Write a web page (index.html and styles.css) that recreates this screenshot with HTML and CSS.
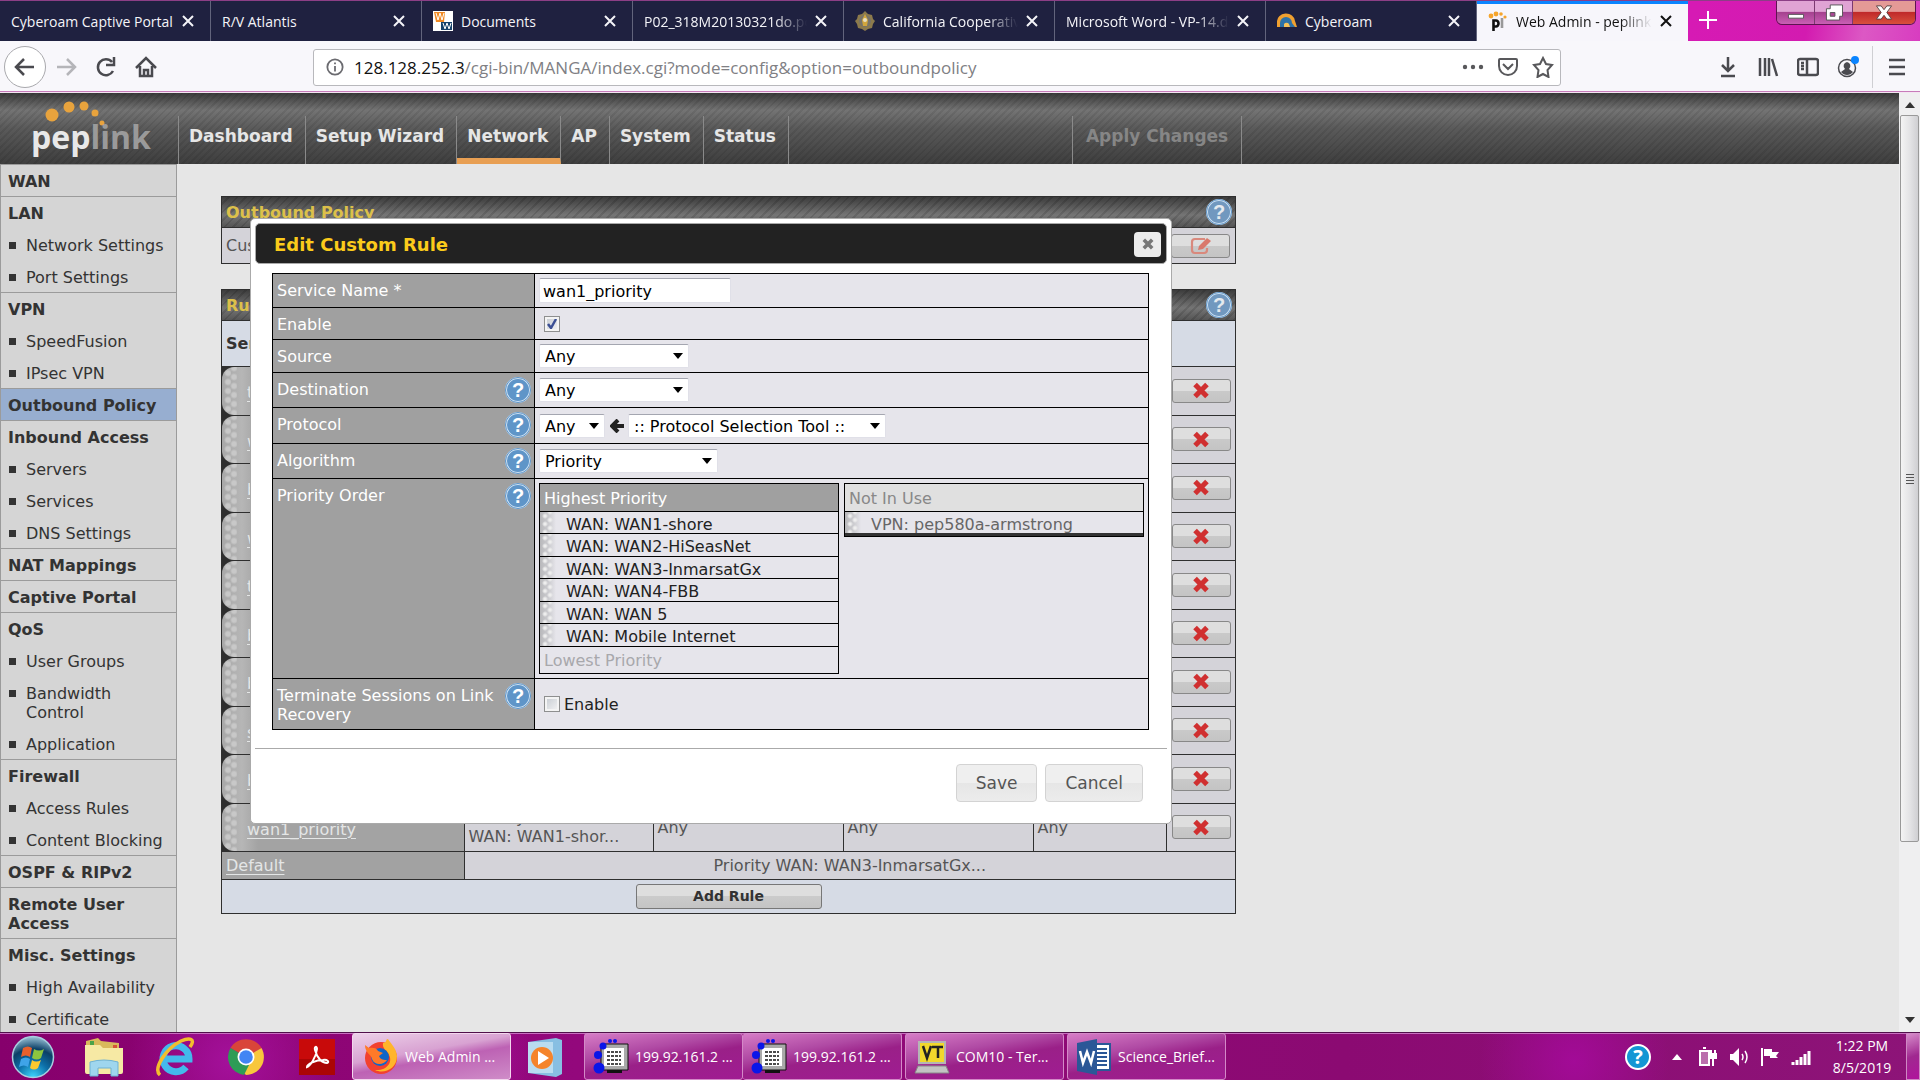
FILE: index.html
```html
<!DOCTYPE html>
<html lang="en">
<head>
<meta charset="utf-8">
<title>Web Admin - peplink</title>
<link rel="stylesheet" href="styles.css">
</head>
<body>
<svg class="sprites" aria-hidden="true">
  <symbol id="i-x" viewBox="0 0 12 12"><path d="M1 1l10 10M11 1L1 11"/></symbol>
  <symbol id="i-del" viewBox="0 0 20 20"><path stroke="#d03030" stroke-width="6" d="M3 3l14 14M17 3L3 17"/></symbol>
  <symbol id="i-term" viewBox="0 0 36 36"><path fill="#a9a9a9" stroke="#111" d="M8 5h27v26H8z"/><path fill="#fff" d="M11 9h20v18H11z"/><path stroke="#111" stroke-width="1.500" stroke-dasharray="3 1" d="M14 13h14M14 17h14M14 21h14M14 25h14"/><path fill="#111" d="M14 31h15v3H14z"/><g fill="#0a16e8"><circle cx="6" cy="29" r="5.500"/><circle cx="5" cy="16" r="4"/><circle cx="10" cy="7" r="3.500"/><circle cx="17" cy="2" r="2"/><circle cx="22" cy="2" r="2"/></g></symbol>
</svg>
<header class="browser">
  <div class="tabs">
    <div class="tab"><span class="tab-title">Cyberoam Captive Portal</span><button class="tab-close" aria-label="Close tab"><svg><use href="#i-x"/></svg></button></div>
    <div class="tab"><span class="tab-title">R/V Atlantis</span><button class="tab-close" aria-label="Close tab"><svg><use href="#i-x"/></svg></button></div>
    <div class="tab"><svg class="favicon" viewBox="0 0 20 20"><path fill="#fff" d="M0 0h20v20H0z"/><path fill="#f08a24" d="M1 1h11l-1 10H3z"/><path fill="#16436b" d="M8 11h11v8H8z"/><path fill="none" stroke="#fff" d="M3 2l2 7 2-7 2 7 2-7M10 12l2 6 2-6 2 6 2-6"/></svg><span class="tab-title">Documents</span><button class="tab-close" aria-label="Close tab"><svg><use href="#i-x"/></svg></button></div>
    <div class="tab"><span class="tab-title fade">P02_318M20130321do.pdf</span><button class="tab-close" aria-label="Close tab"><svg><use href="#i-x"/></svg></button></div>
    <div class="tab"><svg class="favicon" viewBox="0 0 20 20"><path fill="#8c7a4c" d="M10 0l3 3 4 1 1 4 2 2-2 3-1 4-4 1-3 2-3-2-4-1-1-4-2-3 2-2 1-4 4-1z"/><circle cx="10" cy="10" r="6" fill="#77736a"/><path fill="#d2a63c" d="M10 3l3 6-1 6H8L7 9z"/><circle cx="10" cy="9" r="2" fill="#e8dfc0"/></svg><span class="tab-title fade">California Cooperative</span><button class="tab-close" aria-label="Close tab"><svg><use href="#i-x"/></svg></button></div>
    <div class="tab"><span class="tab-title fade">Microsoft Word - VP-14.doc</span><button class="tab-close" aria-label="Close tab"><svg><use href="#i-x"/></svg></button></div>
    <div class="tab"><svg class="favicon" viewBox="0 0 20 20"><path fill="#f0a030" d="M0 16V11a9 8 0 0 1 18-1l2 6z"/><path fill="#2d72a8" d="M3 16v-4a6 6 0 0 1 12 0l3 4z"/><path fill="#f6c25a" d="M7 16v-3a3 3 0 0 1 5 0l1 3z"/></svg><span class="tab-title">Cyberoam</span><button class="tab-close" aria-label="Close tab"><svg><use href="#i-x"/></svg></button></div>
    <div class="tab active"><svg class="favicon" viewBox="0 0 20 20"><g fill="#f5a52c"><circle cx="3" cy="5" r="2.4"/><circle cx="8" cy="3" r="2.4"/><circle cx="13" cy="3" r="1.8"/><circle cx="17" cy="6" r="1.6"/></g><path fill="none" stroke="#111" stroke-width="2.6" d="M5.500 20V9.500h2.500a2.500 3 0 0 1 0 6H6"/><path stroke="#999" stroke-width="2.600" d="M14 7v10"/></svg><span class="tab-title fade">Web Admin - peplink</span><button class="tab-close" aria-label="Close tab"><svg><use href="#i-x"/></svg></button></div>
    <button class="new-tab" aria-label="New tab"><svg viewBox="0 0 18 18"><path d="M9 0v18M0 9h18"/></svg></button>
    <div class="window-buttons">
      <button class="wb" aria-label="Minimize"><svg viewBox="0 0 20 18"><path fill="#fff" stroke="#555" d="M2 11h16v4H2z"/></svg></button>
      <button class="wb" aria-label="Restore"><svg viewBox="0 0 20 18"><path fill="#fff" fill-rule="evenodd" stroke="#555" d="M6 1h13v12h-3v4H2V5h4zM6 9v4h5V9z"/></svg></button>
      <button class="wb close" aria-label="Close"><svg viewBox="0 0 20 18"><path fill="#fff" stroke="#544" d="M2 2h5l3 4 3-4h5l-5 7 5 7h-5l-3-4-3 4H2l5-7z"/></svg></button>
    </div>
  </div>
  <div class="toolbar">
    <button class="back" aria-label="Back"><svg viewBox="0 0 22 22"><path d="M20 11H3M10 3l-8 8 8 8"/></svg></button>
    <button class="tool dim" aria-label="Forward"><svg viewBox="0 0 22 22"><path d="M2 11h17M12 3l8 8-8 8"/></svg></button>
    <button class="tool" aria-label="Reload"><svg viewBox="0 0 22 22"><path d="M17 6a8 8 0 1 0 1 9M19 1v8h-8"/></svg></button>
    <button class="tool" aria-label="Home"><svg viewBox="0 0 22 22"><path d="M1 12L11 2l10 10M5 10v10h12V10M9 20v-6h4v6"/></svg></button>
    <div class="urlbar">
      <svg class="info" viewBox="0 0 20 20"><circle cx="10" cy="10" r="8.500"/><path d="M10 9v6M10 5v2"/></svg>
      <span class="url"><b>128.128.252.3</b>/cgi-bin/MANGA/index.cgi?mode=config&amp;option=outboundpolicy</span>
      <svg class="ub-icon" viewBox="0 0 22 22"><g fill="#58585b" stroke="none"><circle cx="3" cy="11" r="2.200"/><circle cx="11" cy="11" r="2.200"/><circle cx="19" cy="11" r="2.200"/></g></svg>
      <svg class="ub-icon" viewBox="0 0 22 22"><path d="M3 3h16a1 1 0 0 1 1 1v6a9 9 0 0 1-18 0V4a1 1 0 0 1 1-1zM6 8l5 5 5-5"/></svg>
      <svg class="ub-icon" viewBox="0 0 22 22"><path d="M11 2l3 6 6 1-4.500 5 1 7L11 18l-5.500 3 1-7L2 9l6-1z"/></svg>
    </div>
    <div class="tools">
      <button class="tool" aria-label="Downloads"><svg viewBox="0 0 22 22"><path d="M11 1v14M5 9l6 6 6-6M4 20h14"/></svg></button>
      <button class="tool" aria-label="Library"><svg viewBox="0 0 22 22"><path d="M3 2v18M8 2v18M12 2v18M15 3l5 17"/></svg></button>
      <button class="tool" aria-label="Sidebars"><svg viewBox="0 0 22 22"><rect x="1" y="3" width="20" height="16" rx="2"/><path d="M10 3v16M4 7h3M4 10h3M4 13h3"/></svg></button>
      <button class="tool" aria-label="Account"><svg viewBox="0 0 22 22"><circle cx="10" cy="12" r="8.500" stroke-width="1.500"/><path fill="#4a4a4f" stroke="none" d="M10 6a4 4 0 0 1 2 7l4 3c-3 4-9 4-12 0l4-3a4 4 0 0 1 2-7z"/><circle cx="18" cy="4" r="4" fill="#0a84ff" stroke="none"/></svg></button>
    </div>
    <button class="tool menu" aria-label="Menu"><svg viewBox="0 0 22 22"><path d="M3 4h16M3 11h16M3 18h16"/></svg></button>
  </div>
</header>

<div class="viewport">
  <div class="page">
    <div class="topbar">
      <a class="logo" href="#" aria-label="peplink"><svg class="logo-dots" viewBox="0 0 60 28"><g fill="#e8a33d"><circle cx="7" cy="16" r="6.500"/><circle cx="24" cy="8" r="5.500"/><circle cx="39" cy="7" r="4.500"/><circle cx="50" cy="14" r="3.500"/><circle cx="57" cy="24" r="2.500"/></g></svg><span class="logo-text">pep<i>link</i></span></a>
      <nav class="nav">
        <a href="#">Dashboard</a><a href="#">Setup Wizard</a><a href="#" class="on">Network</a><a href="#">AP</a><a href="#">System</a><a href="#">Status</a>
      </nav>
      <a href="#" class="apply">Apply Changes</a>
    </div>
    <div class="body">
      <aside class="side">
        <section><h3>WAN</h3></section>
        <section><h3>LAN</h3><a href="#">Network Settings</a><a href="#">Port Settings</a></section>
        <section><h3>VPN</h3><a href="#">SpeedFusion</a><a href="#">IPsec VPN</a></section>
        <section class="current"><h3>Outbound Policy</h3></section>
        <section><h3>Inbound Access</h3><a href="#">Servers</a><a href="#">Services</a><a href="#">DNS Settings</a></section>
        <section><h3>NAT Mappings</h3></section>
        <section><h3>Captive Portal</h3></section>
        <section><h3>QoS</h3><a href="#">User Groups</a><a href="#">Bandwidth<br>Control</a><a href="#">Application</a></section>
        <section><h3>Firewall</h3><a href="#">Access Rules</a><a href="#">Content Blocking</a></section>
        <section><h3>OSPF &amp; RIPv2</h3></section>
        <section><h3>Remote User<br>Access</h3></section>
        <section><h3>Misc. Settings</h3><a href="#">High Availability</a><a href="#">Certificate<br>Manager</a></section>
      </aside>
      <main class="main">
        <div class="content">
          <div class="panel">
            <div class="panel-head"><h2>Outbound Policy</h2><button class="help" aria-label="Help">?</button></div>
            <div class="policy-row"><span>Custom</span><button class="mini" aria-label="Edit"><svg viewBox="0 0 24 20"><path fill="none" stroke="#d9897d" stroke-width="2.200" d="M16 3H6a3 3 0 0 0-3 3v8a3 3 0 0 0 3 3h9a3 3 0 0 0 3-3v-2"/><path fill="#d9796c" d="M9 14l1-4 8-8 4 3-8 8z"/></svg></button></div>
          </div>
          <div class="panel">
            <div class="panel-head"><h2>Rules</h2><button class="help" aria-label="Help">?</button></div>
            <table class="rules">
              <colgroup><col class="c-name"><col class="c-alg"><col class="c-any"><col class="c-any"><col class="c-port"><col class="c-del"></colgroup>
              <thead><tr><th>Service</th><th></th><th></th><th></th><th></th><th></th></tr></thead>
              <tbody>
                <tr><td class="name"><div><a href="#">t</a></div></td><td></td><td></td><td></td><td></td><td><button class="mini" aria-label="Delete"><svg><use href="#i-del"/></svg></button></td></tr>
                <tr><td class="name"><div><a href="#">w</a></div></td><td></td><td></td><td></td><td></td><td><button class="mini" aria-label="Delete"><svg><use href="#i-del"/></svg></button></td></tr>
                <tr><td class="name"><div><a href="#">b</a></div></td><td></td><td></td><td></td><td></td><td><button class="mini" aria-label="Delete"><svg><use href="#i-del"/></svg></button></td></tr>
                <tr><td class="name"><div><a href="#">w</a></div></td><td></td><td></td><td></td><td></td><td><button class="mini" aria-label="Delete"><svg><use href="#i-del"/></svg></button></td></tr>
                <tr><td class="name"><div><a href="#">t</a></div></td><td></td><td></td><td></td><td></td><td><button class="mini" aria-label="Delete"><svg><use href="#i-del"/></svg></button></td></tr>
                <tr><td class="name"><div><a href="#">b</a></div></td><td></td><td></td><td></td><td></td><td><button class="mini" aria-label="Delete"><svg><use href="#i-del"/></svg></button></td></tr>
                <tr><td class="name"><div><a href="#">b</a></div></td><td></td><td></td><td></td><td></td><td><button class="mini" aria-label="Delete"><svg><use href="#i-del"/></svg></button></td></tr>
                <tr><td class="name"><div><a href="#">s</a></div></td><td></td><td></td><td></td><td></td><td><button class="mini" aria-label="Delete"><svg><use href="#i-del"/></svg></button></td></tr>
                <tr><td class="name"><div><a href="#">b</a></div></td><td></td><td></td><td></td><td></td><td><button class="mini" aria-label="Delete"><svg><use href="#i-del"/></svg></button></td></tr>
                <tr><td class="name"><div><a href="#">wan1_priority</a></div></td><td>Priority<br>WAN: WAN1-shor...</td><td>Any</td><td>Any</td><td>Any</td><td><button class="mini" aria-label="Delete"><svg><use href="#i-del"/></svg></button></td></tr>
              </tbody>
              <tfoot>
                <tr class="default"><td class="default-name"><a href="#">Default</a></td><td colspan="5">Priority WAN: WAN3-InmarsatGx...</td></tr>
                <tr class="add"><td colspan="6"><button class="add-rule">Add Rule</button></td></tr>
              </tfoot>
            </table>
          </div>

          <form class="dialog" role="dialog" aria-labelledby="dlg-title">
            <div class="dialog-head"><h2 id="dlg-title">Edit Custom Rule</h2><button type="button" class="dialog-close" aria-label="Close"><svg viewBox="0 0 20 20"><path stroke="#777" stroke-width="6" d="M3 3l14 14M17 3L3 17"/></svg></button></div>
            <div class="form">
              <div class="row r34"><div class="lab"><label for="svc">Service Name *</label></div><div class="val"><input id="svc" type="text" class="txt" value="wan1_priority"></div></div>
              <div class="row r32"><div class="lab"><label for="en">Enable</label></div><div class="val"><input id="en" type="checkbox" class="chk" checked></div></div>
              <div class="row r33"><div class="lab"><label for="src">Source</label></div><div class="val"><select id="src" class="s150"><option>Any</option></select></div></div>
              <div class="row r35"><div class="lab"><label for="dst">Destination</label><button type="button" class="help" aria-label="Help">?</button></div><div class="val"><select id="dst" class="s150"><option>Any</option></select></div></div>
              <div class="row r36"><div class="lab"><label for="prot">Protocol</label><button type="button" class="help" aria-label="Help">?</button></div><div class="val"><select id="prot" class="s66"><option>Any</option></select><svg class="arrow" viewBox="0 0 14 14"><path d="M14 7H2M8 1L2 7l6 6"/></svg><select class="s258" aria-label="Protocol selection tool"><option>:: Protocol Selection Tool ::</option></select></div></div>
              <div class="row r35"><div class="lab"><label for="alg">Algorithm</label><button type="button" class="help" aria-label="Help">?</button></div><div class="val"><select id="alg" class="s178"><option>Priority</option></select></div></div>
              <div class="row"><div class="lab"><span>Priority Order</span><button type="button" class="help" aria-label="Help">?</button></div>
                <div class="val lists">
                  <div class="list">
                    <div class="list-head">Highest Priority</div>
                    <ul><li>WAN: WAN1-shore</li><li>WAN: WAN2-HiSeasNet</li><li>WAN: WAN3-InmarsatGx</li><li>WAN: WAN4-FBB</li><li>WAN: WAN 5</li><li>WAN: Mobile Internet</li></ul>
                    <div class="list-foot">Lowest Priority</div>
                  </div>
                  <div class="list unused">
                    <div class="list-head">Not In Use</div>
                    <ul><li>VPN: pep580a-armstrong</li></ul>
                  </div>
                </div>
              </div>
              <div class="row r51"><div class="lab"><span>Terminate Sessions on Link<br>Recovery</span><button type="button" class="help" aria-label="Help">?</button></div><div class="val"><input id="term" type="checkbox" class="chk"><label for="term">Enable</label></div></div>
            </div>
            <div class="dialog-foot"><button type="button">Save</button><button type="button">Cancel</button></div>
          </form>
        </div>
      </main>
    </div>
  </div>
  <div class="scroll">
    <svg class="sc-arrow" viewBox="0 0 10 6"><path d="M0 6l5-6 5 6z"/></svg>
    <div class="thumb"><span></span><span></span><span></span><span></span></div>
    <svg class="sc-arrow" viewBox="0 0 10 6"><path d="M0 0l5 6 5-6z"/></svg>
  </div>
</div>

<footer class="taskbar">
  <div class="launch">
    <button aria-label="Start"><svg viewBox="0 0 44 44"><defs><radialGradient id="orb" cx=".5" cy="1" r="1"><stop offset="0" stop-color="#3fd8ff"/><stop offset=".4" stop-color="#0d6fa8"/><stop offset=".7" stop-color="#0b3f66"/><stop offset="1" stop-color="#9cc4d8"/></radialGradient></defs><circle cx="22" cy="22" r="20.500" fill="url(#orb)" stroke="#a9cfe0" stroke-width="1.500"/><path fill="#e8602c" d="M12 13q5-3 9 0l-2 9q-4-3-9 0z"/><path fill="#8cc63f" d="M23 14q5 3 10 0l-3 9q-4 3-9 0z"/><path fill="#3fa4e8" d="M10 24q5-3 9 0l-2 8q-4-3-9 0z"/><path fill="#fcc92e" d="M21 25q4 3 9 0l-3 8q-4 3-8 0z"/></svg></button>
    <button aria-label="Explorer"><svg viewBox="0 0 44 44"><path fill="#d9b95c" d="M4 6l12-3 3 3 18 2v30H4z"/><path fill="#f6e9a4" d="M3 10h15l3 3h20v24q0 2-2 2H5q-2 0-2-2z"/><path fill="#4aa34a" d="M8 6h4v4H8z"/><path fill="#d65238" d="M31 10h4v3h-4z"/><path fill="#9fd6ee" stroke="#6fb2d3" d="M8 27q14-4 28 0v14h-7V33H16v8H8z"/></svg></button>
    <button aria-label="Internet Explorer"><svg viewBox="0 0 44 44"><path fill="none" stroke="#43b9ec" stroke-width="7" d="M13 24h23a13 13 0 1 0-3 8"/><path fill="none" stroke="#f3bd2d" stroke-width="3.500" d="M7 40C0 34 12 14 28 6c9-4 15-2 9 6"/></svg></button>
    <button aria-label="Chrome"><svg viewBox="0 0 44 44"><path fill="#d9453a" d="M22 22L6.500 13a18 18 0 0 1 31 0z"/><path fill="#f8c73c" d="M22 22l15.500-9A18 18 0 0 1 22 40l-5-5z"/><path fill="#2e9c56" d="M22 22l3 8-5 10A18 18 0 0 1 6.500 13z"/><circle cx="22" cy="22" r="8.500" fill="#fff"/><circle cx="22" cy="22" r="6.800" fill="#4285f4"/></svg></button>
    <button aria-label="Acrobat"><svg viewBox="0 0 44 44"><path fill="#c80a0a" d="M4 4h36v36H4z"/><path fill="#8d0000" opacity=".5" d="M4 24h36v16H4z"/><path fill="none" stroke="#fff" stroke-width="2" d="M12 32c3-1 9-9 10-18 0-3-3-3-2 1 2 8 7 13 12 13 3-1 0-4-4-3-7 0-16 4-16 7z"/></svg></button>
  </div>
  <button class="task lit"><svg viewBox="0 0 36 36"><circle cx="18" cy="19" r="16" fill="#f2412f"/><path fill="#ffb52b" d="M20 4c5-1 2-4 5-4 2 4 8 8 9 17 0 14-14 18-22 14 12 1 18-8 14-15-2-5-7-6-6-12z"/><circle cx="17" cy="18" r="9" fill="#1166c8"/><path fill="#ff7a28" d="M2 6l4 3c4-1 8 0 9 3l5 2-4 3c1 4 6 4 8 4-4 6-13 5-15-1C8 15 2 14 2 6z"/></svg><span>Web Admin ...</span></button>
  <div class="launch single"><button aria-label="Media Player"><svg viewBox="0 0 44 44"><path fill="#88bfe2" d="M5 7l28-4 6 2v34l-6 3L5 38z"/><path fill="#b9dcf0" d="M5 7h25v31H5z"/><circle cx="19" cy="23" r="11" fill="#f5842b"/><path fill="#fff" d="M15 16l11 7-11 7z"/></svg></button></div>
  <button class="task"><svg><use href="#i-term"/></svg><span>199.92.161.2 ...</span></button>
  <button class="task joined"><svg><use href="#i-term"/></svg><span>199.92.161.2 ...</span></button>
  <button class="task"><svg viewBox="0 0 36 36"><path fill="#f2d82c" stroke="#b5b5b5" stroke-width="2" d="M5 3h26v21H5z"/><path fill="none" stroke="#222" stroke-width="2.500" d="M9 7l4 12 4-12M18 8h11M24 8v11"/><path fill="#c3c3c3" stroke="#888" d="M4 27h28l3 7H1z"/></svg><span>COM10 - Ter...</span></button>
  <button class="task"><svg viewBox="0 0 36 36"><path fill="#fff" stroke="#2b5797" stroke-width="2" d="M18 5h16v26H18z"/><path stroke="#2b5797" stroke-width="2" d="M21 10h10M21 14h10M21 18h10M21 22h10M21 26h10"/><path fill="#2b5797" d="M1 4l20-4v36L1 32z"/><path fill="none" stroke="#fff" stroke-width="2.500" d="M4 12l3 12 4-11 4 11 3-12"/></svg><span>Science_Brief...</span></button>
  <div class="tray">
    <span class="tray-help">?</span>
    <svg class="up" viewBox="0 0 10 6"><path fill="#fff" d="M0 6l5-6 5 6z"/></svg>
    <svg viewBox="0 0 20 20"><path fill="#fff" fill-opacity=".4" stroke="#fff" stroke-width="2" d="M2 4h9v14H2zM5 1h3"/><path stroke="#fff" stroke-width="2" fill="#fff" d="M13 3v4M17 3v4M12 7h6v4h-6zM15 11v8"/></svg>
    <svg viewBox="0 0 20 20"><path fill="#fff" d="M1 7h3l6-6v18l-6-6H1z"/><path fill="none" stroke="#fff" stroke-width="1.500" d="M13 7q2 3 0 6M16 4q4 6 0 12"/></svg>
    <svg viewBox="0 0 20 20"><path stroke="#fff" stroke-width="2" d="M2 1v18"/><path fill="#fff" d="M4 2h8v3h7l-3 4 2 2h-8V9H4z"/></svg>
    <svg viewBox="0 0 20 20"><path stroke="#fff" stroke-width="3" d="M2 18v-3M6 18v-5M10 18v-8M14 18V7M18 18V4"/></svg>
    <div class="clock">1:22 PM<br>8/5/2019</div>
    <button class="desk" aria-label="Show desktop"></button>
  </div>
</footer>
</body>
</html>
```
FILE: styles.css
```css
* { box-sizing: border-box; }

body {
  margin: 0;
  height: 100vh;
  display: flex;
  flex-direction: column;
  overflow: hidden;
  background: #e6e6e6;
  font: 16px/19px "DejaVu Sans", Verdana, sans-serif;
  color: #333;
}

button { font: inherit; padding: 0; border: 0; background: none; color: inherit; }
h2, h3, ul { margin: 0; padding: 0; font-size: inherit; list-style: none; }
svg { display: block; fill: none; }
.sprites { display: none; }

/* Browser window */
.browser { flex: none; font-family: "Open Sans", "Segoe UI", sans-serif; border-bottom: 1px solid #f4e4f2; }
.tabs {
  display: flex;
  height: 41px;
  border-top: 1px solid #8c3f86;
  background: linear-gradient(100deg, #d61ab4 88%, #d31bb0 94%, #dc58c4 97%, #d83cc0);
}
.tab {
  flex: 0 1 211px;
  min-width: 0;
  display: flex;
  align-items: center;
  gap: 8px;
  padding: 0 16px 0 11px;
  background: #1f2140;
  border-right: 1px solid #62647c;
  color: #f4f4f8;
  font-size: 14px;
}
.tab.active { background: #f7f6fb; border-right: 0; border-top: 3px solid #0a84ff; color: #111; padding-bottom: 3px; }
.tab-title { flex: 1; overflow: hidden; white-space: nowrap; }
.fade { -webkit-mask-image: linear-gradient(90deg, #000 calc(100% - 32px), transparent); mask-image: linear-gradient(90deg, #000 calc(100% - 32px), transparent); }
.favicon { width: 20px; height: 20px; flex: none; }
.tab-close svg { width: 12px; height: 12px; stroke: currentColor; stroke-width: 2; }
.new-tab { padding: 0 11px 2px; }
.new-tab svg { width: 18px; height: 18px; stroke: #fff; stroke-width: 2; }
.window-buttons {
  margin: 0 4px 0 auto;
  display: flex;
  height: 24px;
  border: 1px solid #5d1450;
  border-top: 0;
  border-radius: 0 0 6px 6px;
  overflow: hidden;
}
.wb { width: 38px; display: grid; place-items: center; background: linear-gradient(#e0a3d4 45%, #a5428f 50%, #c95fb4); border-right: 1px solid #7b3a70; }
.wb.close { width: 62px; background: linear-gradient(#e49a96 45%, #c02a2a 50%, #d8503c); border: 0; }
.wb svg { width: 20px; height: 17px; }

.toolbar {
  display: flex;
  align-items: center;
  height: 51px;
  padding: 2px 12px 0 4px;
  gap: 18px;
  background: #f8f7fb;
  border-bottom: 1px solid #c77cba;
}
.back { width: 42px; height: 42px; border: 1px solid #a9a9ad; border-radius: 50%; background: #fff; display: grid; place-items: center; margin-right: -9px; }
.tool svg, .back svg { width: 22px; height: 22px; stroke: #4a4a4f; stroke-width: 2.5; }
.tool.dim svg { stroke: #b5b5b9; }
.urlbar {
  flex: 1;
  max-width: 1248px;
  height: 37px;
  margin-left: 138px;
  padding: 0 6px 0 12px;
  display: flex;
  align-items: center;
  gap: 13px;
  background: #fff;
  border: 1px solid #b8b8bc;
  border-radius: 3px;
  font-size: 17px;
  color: #808084;
}
.url { flex: 1; white-space: nowrap; margin-left: -3px; }
.url b { color: #111; font-weight: 400; }
.info { width: 18px; height: 18px; stroke: #6b6b70; stroke-width: 2; }
.ub-icon { width: 22px; height: 22px; stroke: #58585b; stroke-width: 2; }
.tools { margin: 0 -5px 0 auto; display: flex; gap: 18px; }
.menu { padding-left: 13px; border-left: 1px solid #cfcfd3; height: 42px; }

/* Page area */
.viewport { flex: 1; min-height: 0; display: flex; }
.page { flex: 1; min-width: 0; overflow: hidden; }
.topbar {
  height: 71px;
  display: flex;
  align-items: flex-end;
  background:
    repeating-linear-gradient(135deg, transparent 0 3px, rgba(0, 0, 0, .08) 3px 5px),
    linear-gradient(#3a3a3a, #747474 24%, #5a5a5a 50%, #3e3e3e);
  font-weight: 700;
  font-size: 17px;
}
.logo { width: 178px; height: 71px; padding: 6px 0 0 31px; text-decoration: none; }
.logo-dots { width: 60px; height: 28px; margin-left: 14px; }
.logo-text { display: block; margin-top: -9px; font: 700 32px/37px "Open Sans", sans-serif; color: #e8e8e8; }
.logo-text i { font-style: normal; color: #9a9a9a; }
.nav, .apply { height: 48px; }
.nav { display: flex; border-left: 1px solid #8a8a8a; }
.nav a, .apply { padding: 11px 12px 0 10px; color: #e6e6e6; text-decoration: none; border-right: 1px solid #8a8a8a; white-space: nowrap; }
.nav .on { border-bottom: 6px solid #e89f53; }
.apply { margin-left: 283px; padding: 11px 13px 0; border-left: 1px solid #8a8a8a; color: #868686; }

.body { display: flex; align-items: flex-start; }
.side { width: 177px; flex: none; background: #d5d5d5; border: 1px solid #9b9b9b; border-top: 0; }
.side section { border-top: 1px solid #9b9b9b; }
.side .current { background: #97aed0; }
.side h3 { padding: 7px 0 5px 7px; }
.side a { display: block; position: relative; padding: 8px 0 5px 25px; color: #333; text-decoration: none; }
.side a::before { content: ""; position: absolute; left: 8px; top: 14px; width: 7px; height: 7px; background: #333; }

.main { flex: 1; min-width: 0; padding: 32px 24px 0 44px; }
.content { position: relative; max-width: 1015px; display: flex; flex-direction: column; gap: 25px; }
.panel { border: 1px solid #2f2f2f; }
.panel-head {
  height: 31px;
  display: flex;
  align-items: center;
  justify-content: space-between;
  padding: 0 3px 0 4px;
  border-bottom: 1px solid #2f2f2f;
  color: #dcc04a;
  background:
    repeating-linear-gradient(135deg, transparent 0 4px, rgba(0, 0, 0, .12) 4px 6px),
    linear-gradient(#3c3c3c, #757575 60%, #555);
}
.help {
  flex: none;
  width: 26px;
  height: 26px;
  border: 2px solid #cfe2f3;
  border-radius: 50%;
  background: #5f95c8;
  outline: 1px solid #5f95c8;
  outline-offset: -1px;
  color: #fff;
  font: 700 20px/22px "Liberation Sans", Arial, sans-serif;
}
.panel-head .help { background: #7198bf; color: #e4e9ee; }
.policy-row { height: 35px; display: flex; align-items: center; justify-content: space-between; padding: 0 5px 0 4px; background: #d4d3d9; color: #555; }
.mini { display: grid; place-items: center; width: 59px; height: 24px; border: 1px solid #888; border-radius: 3px; background: linear-gradient(#dedede 50%, #c9c9c9 50%, #c4c4c4); }
.mini svg { width: 18px; height: 17px; }
.policy-row .mini svg { width: 24px; height: 20px; }

.rules { width: 100%; table-layout: fixed; border-collapse: collapse; }
.c-name { width: 242px; }
.c-any { width: 190px; }
.c-port { width: 133px; }
.c-del { width: 69px; }
.rules th { height: 45px; padding: 0 4px; text-align: left; background: #d6dbe5; }
.rules td { height: 48px; padding: 0 4px; border: 1px solid #2f2f2f; background: #d4d3d9; color: #555; }
.rules tbody tr:nth-child(odd) td { height: 49px; }
.rules tr > :first-child { border-left: 0; }
.rules tr > :last-child { border-right: 0; }
.rules td:last-child .mini { margin-left: 1px; }
.rules .name { padding: 0; background: #2f2f2f; }
.name div {
  height: 47px;
  padding: 16px 0 0 25px;
  border-radius: 12px 0 0 12px;
  background:
    radial-gradient(circle at 4px 4px, #c8c8c8 0 2px, transparent 4px) 2px 2px / 7px 9px repeat-y,
    radial-gradient(circle at 4px 4px, #c8c8c8 0 2px, transparent 4px) 8px 6px / 7px 9px repeat-y,
    linear-gradient(90deg, #a8a8a8, #b6b6b6 20px, #a3a3a3 36px);
}
tr:nth-child(odd) .name div { height: 48px; }
.rules a { color: #e4e6e6; text-underline-offset: 3px; text-decoration-thickness: 1px; }
.rules .default td { height: 28px; text-align: center; }
.rules .default .default-name { background: #a2a2a2; text-align: left; }
.rules .add td { height: 34px; background: #d6dbe5; border-bottom: 0; text-align: center; }
.add-rule { width: 186px; height: 25px; border: 1px solid #777; border-radius: 3px; background: linear-gradient(#dedede 50%, #cbcbcb 50%, #c4c4c4); font-size: 14px; font-weight: 700; color: #333; vertical-align: middle; }

/* Rule editor */
.dialog { position: absolute; top: 22px; left: 29px; right: 64px; padding: 4px 4px 21px; background: #fff; border: 1px solid #aaa; border-radius: 5px; }
.dialog-head { height: 41px; display: flex; align-items: center; justify-content: space-between; padding: 1px 5px 0 18px; border: 1px solid #aaa; border-radius: 5px; background: #222; font-size: 18px; }
.dialog-head h2 { color: #fbcb1b; }
.dialog-close { width: 27px; height: 25px; display: grid; place-items: center; border-radius: 4px; background: #ececec; }
.dialog-close svg { width: 12px; height: 12px; }

.form { margin: 9px 18px 18px 17px; border: 1px solid #000; border-top: 0; background: #e6e5eb; color: #222; }
.row { display: flex; border-top: 1px solid #000; }
.r32 { height: 32px; }
.r33 { height: 33px; }
.r34 { height: 34px; }
.r35 { height: 35px; }
.r36 { height: 36px; }
.r51 { min-height: 51px; }
.lab { width: 262px; flex: none; display: flex; justify-content: space-between; align-items: flex-start; padding: 4px 3px 0 4px; background: #a0a0a0; border-right: 1px solid #000; color: #fff; }
.lab > :first-child { padding-top: 3px; white-space: nowrap; }
.val { flex: 1; min-width: 0; display: flex; align-items: center; padding: 0 4px; }
.txt, select { border: 1px solid #e0e0e8; border-top-color: #a4a6b0; border-radius: 2px; background: #fff; color: #000; font: inherit; }
.txt { width: 192px; height: 25px; padding: 1px 3px 0; }
select { appearance: none; height: 24px; padding: 1px 5px 0; background: #fff url("data:image/svg+xml,%3Csvg xmlns='http://www.w3.org/2000/svg' width='10' height='6'%3E%3Cpath d='M0 0h10L5 6z'/%3E%3C/svg%3E") no-repeat right 5px center; }
.s150 { width: 150px; }
.s66 { width: 66px; }
.s178 { width: 179px; }
.s258 { width: 258px; }
.arrow { width: 14px; height: 14px; margin: 0 4px 0 5px; stroke: #222; stroke-width: 4; }
.chk { appearance: none; width: 16px; height: 16px; margin: 0 4px 0 5px; border: 1px solid #8e8f8f; background: linear-gradient(135deg, #c4c9d0, #f6f6f6); box-shadow: inset 0 0 0 2px #f4f4f4; }
.chk:checked { background: url("data:image/svg+xml,%3Csvg xmlns='http://www.w3.org/2000/svg' width='14' height='14'%3E%3Cpath d='M3 7l3 4 5-9' fill='none' stroke='%233b4f94' stroke-width='2.500'/%3E%3C/svg%3E") center no-repeat, linear-gradient(135deg, #c4c9d0, #f6f6f6); }

.lists { align-items: flex-start; gap: 5px; padding-top: 4px; padding-bottom: 4px; }
.list { flex: 1; border: 1px solid #000; }
.list-head { height: 27px; padding: 5px 4px 0; background: #a0a0a0; color: #fff; }
.list li {
  height: 23px;
  padding: 3px 0 0 26px;
  border-top: 1px solid #000;
  background:
    radial-gradient(circle at 3px 3px, #eee 0 1px, transparent 3px) 2px 1px / 6px 8px repeat-y,
    radial-gradient(circle at 3px 3px, #eee 0 1px, transparent 3px) 7px 5px / 6px 8px repeat-y,
    linear-gradient(90deg, #b8b8bb, #d0d0d4 10px, #e6e5eb 16px);
}
.list li:nth-child(odd) { height: 22px; }
.list-foot { height: 27px; padding: 4px 4px 0; border-top: 1px solid #000; color: #a8a8ac; }
.unused .list-head { background: #e0e0e0; color: #888; }
.unused ul { color: #666; border-bottom: 3px solid #333; }

.dialog-foot { display: flex; justify-content: flex-end; gap: 8px; padding: 15px 24px 0; border-top: 1px solid #aaa; font-size: 17px; }
.dialog-foot button { height: 38px; padding: 0 19px; border: 1px solid #d3d3d3; border-radius: 4px; background: linear-gradient(#efefef 50%, #e6e6e6 50%, #ececec); color: #555; }

/* Scroll bar */
.scroll { width: 21px; flex: none; display: flex; flex-direction: column; align-items: center; padding: 9px 0; background: #efeff0; }
.sc-arrow { width: 10px; height: 6px; fill: #333; }
.thumb { flex: 0 1 727px; width: 19px; margin: 7px 0 auto; display: flex; flex-direction: column; align-items: center; justify-content: center; gap: 2px; border: 1px solid #999; border-radius: 2px; background: linear-gradient(90deg, #f4f4f4, #e4e4e6 50%, #cfcfd2); }
.thumb span { width: 8px; height: 1px; background: #555; }

/* Task bar */
.taskbar {
  flex: none;
  display: flex;
  height: 48px;
  border-top: 1px solid #50104a;
  box-shadow: inset 0 1px 0 #c86fc0;
  background:
    radial-gradient(circle at 12% 60%, rgba(170, 20, 165, .8), transparent 6%),
    radial-gradient(circle at 24% 60%, rgba(170, 20, 165, .8), transparent 5%),
    radial-gradient(circle at 82% 60%, rgba(165, 10, 155, .9), transparent 6%),
    linear-gradient(90deg, #86006c, #93087c 30%, #8b0a72 70%, #8d1478);
  font: 14px/22px "Open Sans", "Segoe UI", sans-serif;
  color: #fff;
}
.launch { display: flex; align-items: center; gap: 27px; padding: 0 13px 0 11px; }
.launch svg { width: 44px; height: 44px; }
.launch.single { padding: 0 17px 0 12px; }
.task {
  flex: 0 1 159px;
  min-width: 0;
  display: flex;
  align-items: center;
  gap: 6px;
  margin-right: 3px;
  padding: 0 8px;
  border: 1px solid #d489c8;
  border-radius: 3px;
  background: linear-gradient(170deg, #d67cc6, #b04aa4 35%, #9a2088 55%, #a01c92);
  white-space: nowrap;
}
.task.lit { margin-right: 0; padding-left: 10px; border-color: #f3d6ee; background: linear-gradient(170deg, #ecd0e8, #d8a2d2 40%, #bd62b4 55%, #cf8cc8); }
.joined { margin-left: -3px; border-left: 0; }
.task svg { width: 36px; height: 36px; flex: none; }
.tray { margin-left: auto; display: flex; align-items: center; gap: 11px; }
.tray svg { width: 20px; height: 20px; }
.tray .up { width: 10px; height: 6px; margin: 0 5px 0 10px; }
.tray-help { width: 26px; height: 26px; border: 2px solid #fff; border-radius: 50%; background: #1296d4; text-align: center; font: 700 20px/22px "Open Sans", sans-serif; }
.clock { width: 80px; text-align: center; }
.desk { width: 14px; height: 47px; border: 1px solid #cf88c4; background: linear-gradient(160deg, #d68cca, #a02890 50%, #b0149c); margin-left: -7px; }
```
